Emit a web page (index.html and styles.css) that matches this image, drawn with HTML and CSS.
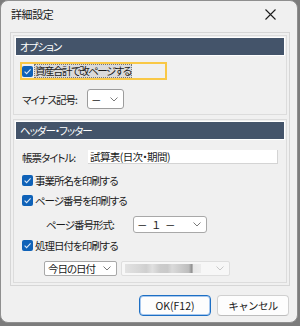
FILE: index.html
```html
<!DOCTYPE html>
<html lang="ja">
<head>
  <meta charset="UTF-8" />
  <title>詳細設定</title>
  <link rel="stylesheet" href="styles.css">
</head>
<body>

  <div class="window">
    <div class="titlebar">
      <span class="title">詳細設定</span>
      <svg class="close" width="11" height="11" viewBox="0 0 11 11">
        <path d="M0.5 0.5 L10.5 10.5 M10.5 0.5 L0.5 10.5" stroke="#1c1c1c" stroke-width="1.1" fill="none"/>
      </svg>
    </div>

    <div class="panel">
      <div class="group group-option">
        <div class="group-head">オプション</div>

        <div class="focus-row">
          <span class="check"><svg width="11" height="11" viewBox="0 0 11 11"><path d="M2.6 5.6 L4.6 7.6 L8.6 3.4" stroke="#dbe8f7" stroke-width="1.1" fill="none"/></svg></span>
          <span class="focus-text">資産合計で改ページする</span>
        </div>

        <div class="row row-minus">
          <span class="label label-minus">マイナス記号:</span>
          <div class="select select-minus">
            <span>－</span>
            <svg class="chev" width="8" height="5" viewBox="0 0 8 5"><path d="M0.5 0.5 L4 4 L7.5 0.5" stroke="#7a7a7a" fill="none"/></svg>
          </div>
        </div>
      </div>

      <div class="group group-header">
        <div class="group-head">ヘッダー・フッター</div>

        <div class="row row-title">
          <span class="label label-title">帳票タイトル:</span>
          <div class="textbox">試算表(日次・期間)</div>
        </div>

        <div class="row cb-row cb-first">
          <span class="check"><svg width="11" height="11" viewBox="0 0 11 11"><path d="M2.6 5.6 L4.6 7.6 L8.6 3.4" stroke="#dbe8f7" stroke-width="1.1" fill="none"/></svg></span>
          <span>事業所名を印刷する</span>
        </div>

        <div class="row cb-row">
          <span class="check"><svg width="11" height="11" viewBox="0 0 11 11"><path d="M2.6 5.6 L4.6 7.6 L8.6 3.4" stroke="#dbe8f7" stroke-width="1.1" fill="none"/></svg></span>
          <span>ページ番号を印刷する</span>
        </div>

        <div class="row row-format">
          <span class="label label-format">ページ番号形式:</span>
          <div class="select select-format">
            <span class="dash">－&nbsp;&nbsp;１&nbsp;&nbsp;－</span>
            <svg class="chev" width="8" height="5" viewBox="0 0 8 5"><path d="M0.5 0.5 L4 4 L7.5 0.5" stroke="#7a7a7a" fill="none"/></svg>
          </div>
        </div>

        <div class="row cb-row">
          <span class="check"><svg width="11" height="11" viewBox="0 0 11 11"><path d="M2.6 5.6 L4.6 7.6 L8.6 3.4" stroke="#dbe8f7" stroke-width="1.1" fill="none"/></svg></span>
          <span>処理日付を印刷する</span>
        </div>

        <div class="row row-date">
          <div class="select select-today">
            <span>今日の日付</span>
            <svg class="chev" width="8" height="5" viewBox="0 0 8 5"><path d="M0.5 0.5 L4 4 L7.5 0.5" stroke="#7a7a7a" fill="none"/></svg>
          </div>
          <div class="select select-off">
            <span class="blur"></span>
            <svg class="chev" width="8" height="5" viewBox="0 0 8 5"><path d="M0.5 0.5 L4 4 L7.5 0.5" stroke="#c8c8c8" fill="none"/></svg>
          </div>
        </div>
      </div>
    </div>

    <div class="buttons">
      <button class="btn btn-ok">OK(F12)</button>
      <button class="btn">キャンセル</button>
    </div>
  </div>

</body>
</html>
```

FILE: styles.css
```css
body {
  margin: 0;
  background: #7c7c7c;
  font-family: "Noto Sans CJK JP", "Noto Sans", sans-serif;
  font-size: 10.5px;
  letter-spacing: -1px;
  color: #1a1a1a;
  font-feature-settings: "palt";
}

.window {
  width: 298px;
  height: 323px;
  box-sizing: border-box;
  border: 1px solid #8f8f8f;
  border-radius: 8px;
  background: #f0f0f0;
  overflow: hidden;
}

.titlebar {
  height: 31px;
  box-sizing: border-box;
  display: flex;
  align-items: center;
  justify-content: space-between;
  padding: 0 21px 5px 10px;
}

.title {
  font-size: 11px;
  letter-spacing: -0.4px;
}

.close {
  margin-top: 1px;
}

.panel {
  margin: 0 7px 0 9px;
  height: 254px;
  box-sizing: border-box;
  border: 1px solid #d6d6d6;
  padding: 2px;
}

.group {
  border: 1px solid #dcdcdc;
  box-sizing: border-box;
  padding: 1px;
}

.group-option {
  height: 80px;
}

.group-header {
  height: 164px;
  margin-top: 4px;
}

.group-head {
  height: 17px;
  line-height: 17px;
  border: 1px solid #fff;
  background: #44546a;
  color: #fff;
  padding-left: 4px;
}

.row {
  display: flex;
  align-items: center;
  padding-left: 7px;
}

.check {
  width: 11px;
  height: 11px;
  border-radius: 2px;
  background: #0f62b8;
  display: inline-flex;
  flex-shrink: 0;
}

.focus-row {
  display: flex;
  align-items: center;
  width: 147px;
  height: 18px;
  box-sizing: border-box;
  margin: 6px 0 0 5px;
  border: 2px solid #f9c846;
}

.focus-text {
  margin-left: 1px;
  padding: 0 1px;
  height: 14px;
  line-height: 14px;
  background: #dadada;
  outline: 1px dotted #777;
  outline-offset: -1px;
  letter-spacing: -1.5px;
}

.select {
  display: flex;
  align-items: center;
  justify-content: space-between;
  box-sizing: border-box;
  background: #fff;
  border: 1px solid #9c9c9c;
  border-radius: 3px;
  padding: 0 5px 0 3px;
}

.label-minus {
  width: 65px;
}

.label-title {
  width: 66px;
}

.label-format {
  width: 87px;
}

.select-minus {
  width: 37px;
  height: 20px;
}

.row-minus {
  margin-top: 9px;
}

.row-title {
  margin-top: 10px;
  height: 14px;
}

.textbox {
  width: 190px;
  height: 14px;
  line-height: 14px;
  box-sizing: border-box;
  background: #fff;
  border-right: 1px solid #d4d4d4;
  border-bottom: 1px solid #d4d4d4;
  padding-left: 2px;
  letter-spacing: -0.6px;
}

.cb-row {
  height: 16px;
  margin-top: 4px;
  gap: 2px;
}

.cb-first {
  margin-top: 8px;
}

.row-format {
  margin-top: 8px;
  height: 17px;
  padding-left: 31px;
}

.select-format {
  width: 74px;
  height: 17px;
  border-color: #a8a8a8;
}

.dash {
  letter-spacing: 0;
}

.row-date {
  margin-top: 8px;
  height: 15px;
  padding-left: 29px;
  gap: 4px;
}

.select-today {
  width: 73px;
  height: 15px;
  border-color: #a8a8a8;
  border-radius: 2px;
}

.select-off {
  width: 109px;
  height: 15px;
  background: #f7f7f7;
  border-color: #dedede;
  border-radius: 2px;
}

.blur {
  width: 76px;
  height: 9px;
  background: linear-gradient(to right, #e2e2e2 0%, #d6d6d6 20%, #cfcfcf 28%, #e0e0e0 36%, #cccccc 46%, #c9c9c9 56%, #dadada 62%, #cdcdcd 72%, #bdbdbd 84%, #8f8f8f 88%, #e6e6e6 90%, #ececec 100%);
}

.buttons {
  display: flex;
  justify-content: flex-end;
  gap: 6px;
  margin-top: 9px;
  padding-right: 8px;
}

.btn {
  width: 72px;
  height: 21px;
  padding: 0;
  font-family: inherit;
  font-size: 10.5px;
  letter-spacing: -0.6px;
  color: #1a1a1a;
  background: #fdfdfd;
  border: 1px solid #d0d0d0;
  border-bottom-color: #bdbdbd;
  border-radius: 4px;
}

.btn-ok {
  letter-spacing: 0;
  border: 1px solid #1d6fc4;
  box-shadow: inset 0 0 0 1px #a8c8ee;
}
```
